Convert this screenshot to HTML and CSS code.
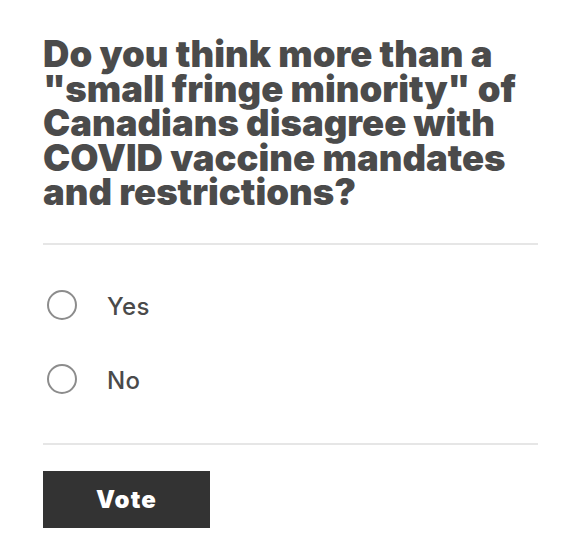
FILE: index.html
```html
<!DOCTYPE html>
<html lang="en">
<head>
    <meta charset="UTF-8">
    <meta name="viewport" content="width=device-width, initial-scale=1.0">
    <title>Poll</title>
    <link rel="stylesheet" href="styles.css">
</head>
<body>
    <form class="poll">
        <h2 class="poll-question">Do you think more than a "small fringe minority" of Canadians disagree with COVID vaccine mandates and restrictions?</h2>

        <div class="poll-options">
            <label class="poll-option">
                <input type="radio" name="answer" value="yes">
                <span class="radio-mark"></span>
                <span class="option-text">Yes</span>
            </label>
            <label class="poll-option">
                <input type="radio" name="answer" value="no">
                <span class="radio-mark"></span>
                <span class="option-text">No</span>
            </label>
        </div>

        <button type="submit" class="vote-button">Vote</button>
    </form>
</body>
</html>
```

FILE: styles.css
```css
/* Reset */
* {
    margin: 0;
    padding: 0;
    box-sizing: border-box;
}

body {
    font-family: Inter, "Noto Sans", Arial, sans-serif;
    background-color: #fff;
    color: #4a4a4a;
}

.poll {
    width: 495px;
    margin-left: 43px;
}

/* Question */
.poll-question {
    font-size: 36.5px;
    font-weight: 900;
    line-height: 34.5px;
    color: #4b4b4b;
    padding-top: 37px;
    padding-bottom: 33px;
    border-bottom: 2px solid #e6e6e6;
}

/* Options */
.poll-options {
    padding: 23px 0 27px;
    border-bottom: 2px solid #e6e6e6;
}

.poll-option {
    display: flex;
    align-items: center;
    height: 74px;
    cursor: pointer;
}

.poll-option input {
    display: none;
}

.radio-mark {
    width: 30px;
    height: 30px;
    margin-left: 4px;
    border: 2.7px solid #8c8c8c;
    border-radius: 50%;
}

.option-text {
    margin-left: 30px;
    padding-top: 4px;
    font-size: 24px;
    font-weight: 500;
    letter-spacing: 0.4px;
    color: #4a4a4a;
}

/* Button */
.vote-button {
    display: block;
    width: 167px;
    height: 57px;
    margin-top: 26px;
    background-color: #333;
    color: #fff;
    border: none;
    font-family: Inter, Arial, sans-serif;
    font-size: 24px;
    font-weight: 900;
    letter-spacing: 1.2px;
    cursor: pointer;
}
```
